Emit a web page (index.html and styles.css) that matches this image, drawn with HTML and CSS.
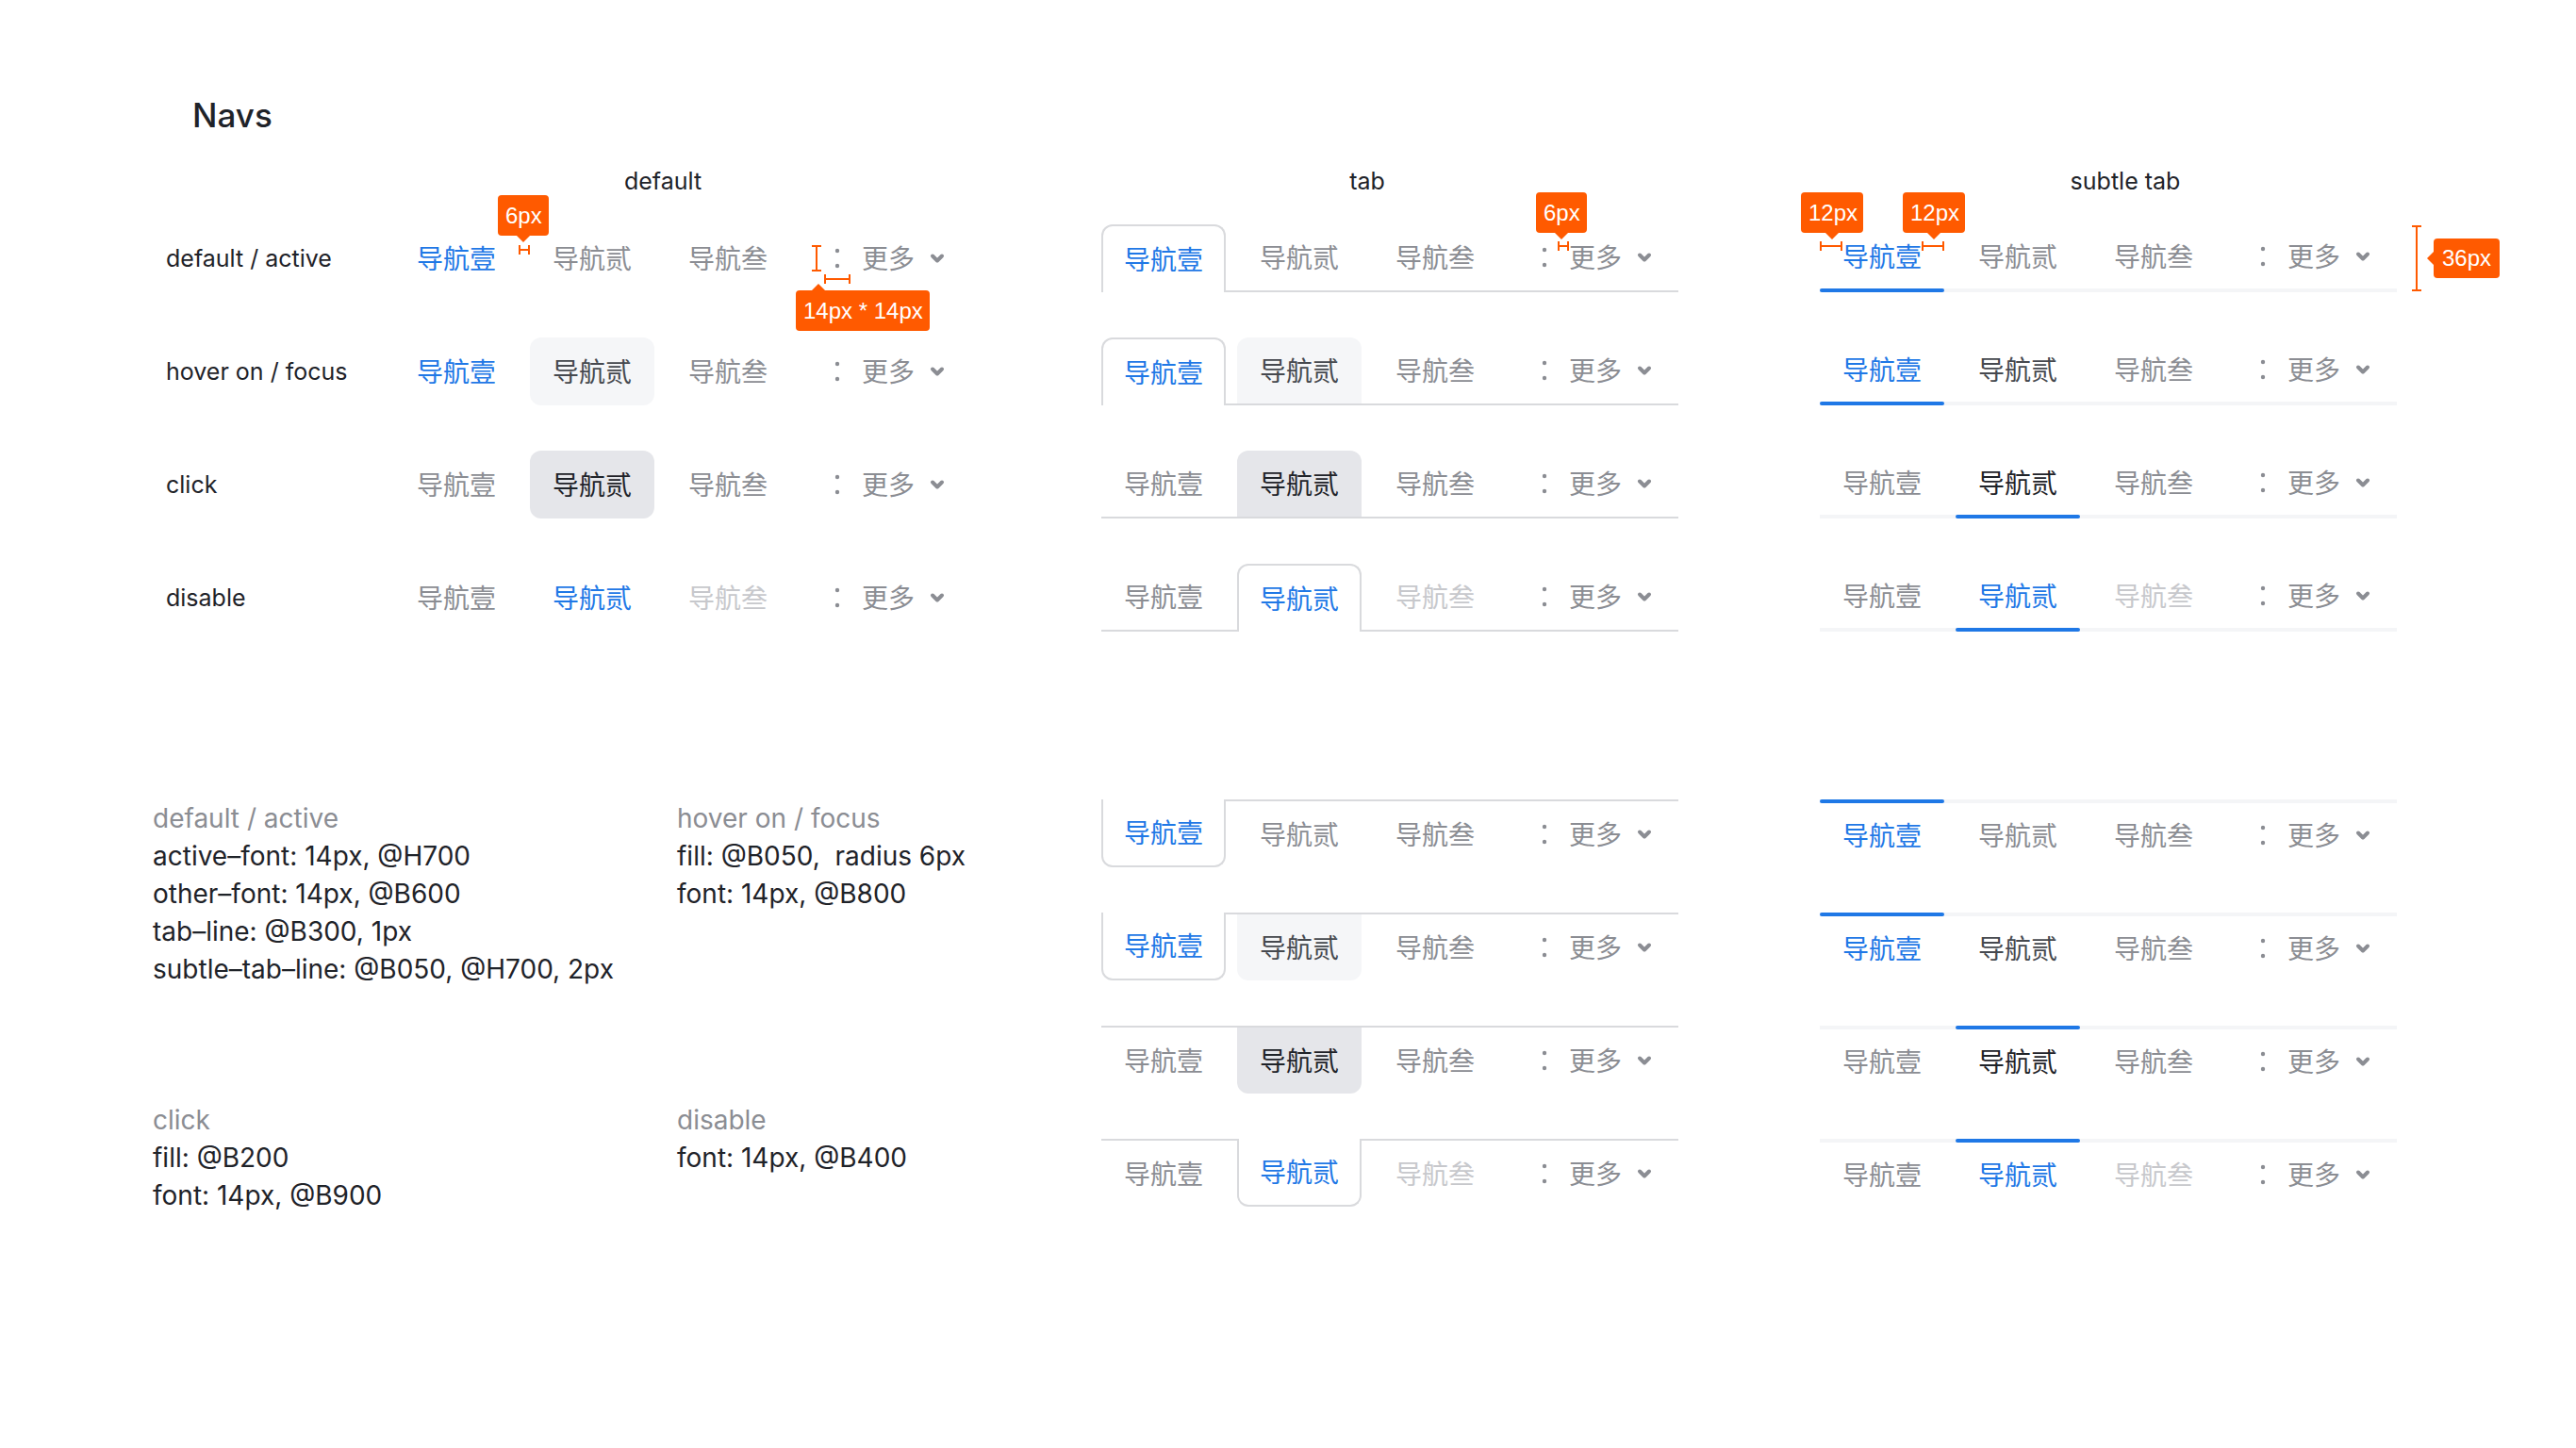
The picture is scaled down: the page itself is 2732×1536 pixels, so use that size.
FILE: index.html
```html
<!DOCTYPE html>
<html lang="zh-CN">
<head>
<meta charset="utf-8">
<title>Navs</title>
<link rel="stylesheet" href="styles.css">
</head>
<body>
<div class="page">
  <h1 class="title">Navs</h1>

  <div class="heads">
    <div></div>
    <div><div class="colhead h-default">default</div></div>
    <div><div class="colhead h-tab">tab</div></div>
    <div><div class="colhead h-subtle">subtle tab</div></div>
  </div>

  <section class="matrix">
    <!-- row 1 -->
    <div class="rlabel">default / active</div>
    <div class="cell">
      <nav class="nav plain">
        <span class="item active">导航壹</span>
        <span class="item">导航贰</span>
        <span class="item">导航叁</span>
        <span class="more"><svg class="dots" viewBox="0 0 28 28"><circle cx="14" cy="6" r="2.2"/><circle cx="14" cy="22" r="2.2"/></svg><span class="more-text">更多</span><svg class="chev" viewBox="0 0 24 24"><path d="M7 9.5 L12 14.5 L17 9.5"/></svg></span>
        <span class="badge b-def6">6px</span>
        <span class="hbracket hb-def6"></span>
        <span class="vbracket vb-icon"></span>
        <span class="hbracket hb-icon"></span>
        <span class="badge up b-icon">14px * 14px</span>
      </nav>
    </div>
    <div class="cell">
      <nav class="nav tabs">
        <span class="item active sel">导航壹</span>
        <span class="item">导航贰</span>
        <span class="item">导航叁</span>
        <span class="more"><svg class="dots" viewBox="0 0 28 28"><circle cx="14" cy="6" r="2.2"/><circle cx="14" cy="22" r="2.2"/></svg><span class="more-text">更多</span><svg class="chev" viewBox="0 0 24 24"><path d="M7 9.5 L12 14.5 L17 9.5"/></svg></span>
        <span class="badge b-tab6">6px</span>
        <span class="hbracket hb-tab6"></span>
      </nav>
    </div>
    <div class="cell">
      <nav class="nav subtle">
        <span class="item active ind">导航壹</span>
        <span class="item">导航贰</span>
        <span class="item">导航叁</span>
        <span class="more"><svg class="dots" viewBox="0 0 28 28"><circle cx="14" cy="6" r="2.2"/><circle cx="14" cy="22" r="2.2"/></svg><span class="more-text">更多</span><svg class="chev" viewBox="0 0 24 24"><path d="M7 9.5 L12 14.5 L17 9.5"/></svg></span>
        <span class="badge b-s12a">12px</span>
        <span class="badge b-s12b">12px</span>
        <span class="hbracket hb-s12a"></span>
        <span class="hbracket hb-s12b"></span>
        <span class="vbracket vb-36"></span>
        <span class="badge left b-36">36px</span>
      </nav>
    </div>

    <!-- row 2 -->
    <div class="rlabel">hover on / focus</div>
    <div class="cell">
      <nav class="nav plain">
        <span class="item active">导航壹</span>
        <span class="item hover">导航贰</span>
        <span class="item">导航叁</span>
        <span class="more"><svg class="dots" viewBox="0 0 28 28"><circle cx="14" cy="6" r="2.2"/><circle cx="14" cy="22" r="2.2"/></svg><span class="more-text">更多</span><svg class="chev" viewBox="0 0 24 24"><path d="M7 9.5 L12 14.5 L17 9.5"/></svg></span>
      </nav>
    </div>
    <div class="cell">
      <nav class="nav tabs">
        <span class="item active sel">导航壹</span>
        <span class="item hover">导航贰</span>
        <span class="item">导航叁</span>
        <span class="more"><svg class="dots" viewBox="0 0 28 28"><circle cx="14" cy="6" r="2.2"/><circle cx="14" cy="22" r="2.2"/></svg><span class="more-text">更多</span><svg class="chev" viewBox="0 0 24 24"><path d="M7 9.5 L12 14.5 L17 9.5"/></svg></span>
      </nav>
    </div>
    <div class="cell">
      <nav class="nav subtle">
        <span class="item active ind">导航壹</span>
        <span class="item hover">导航贰</span>
        <span class="item">导航叁</span>
        <span class="more"><svg class="dots" viewBox="0 0 28 28"><circle cx="14" cy="6" r="2.2"/><circle cx="14" cy="22" r="2.2"/></svg><span class="more-text">更多</span><svg class="chev" viewBox="0 0 24 24"><path d="M7 9.5 L12 14.5 L17 9.5"/></svg></span>
      </nav>
    </div>

    <!-- row 3 -->
    <div class="rlabel">click</div>
    <div class="cell">
      <nav class="nav plain">
        <span class="item">导航壹</span>
        <span class="item press">导航贰</span>
        <span class="item">导航叁</span>
        <span class="more"><svg class="dots" viewBox="0 0 28 28"><circle cx="14" cy="6" r="2.2"/><circle cx="14" cy="22" r="2.2"/></svg><span class="more-text">更多</span><svg class="chev" viewBox="0 0 24 24"><path d="M7 9.5 L12 14.5 L17 9.5"/></svg></span>
      </nav>
    </div>
    <div class="cell">
      <nav class="nav tabs">
        <span class="item">导航壹</span>
        <span class="item press">导航贰</span>
        <span class="item">导航叁</span>
        <span class="more"><svg class="dots" viewBox="0 0 28 28"><circle cx="14" cy="6" r="2.2"/><circle cx="14" cy="22" r="2.2"/></svg><span class="more-text">更多</span><svg class="chev" viewBox="0 0 24 24"><path d="M7 9.5 L12 14.5 L17 9.5"/></svg></span>
      </nav>
    </div>
    <div class="cell">
      <nav class="nav subtle">
        <span class="item">导航壹</span>
        <span class="item press ind">导航贰</span>
        <span class="item">导航叁</span>
        <span class="more"><svg class="dots" viewBox="0 0 28 28"><circle cx="14" cy="6" r="2.2"/><circle cx="14" cy="22" r="2.2"/></svg><span class="more-text">更多</span><svg class="chev" viewBox="0 0 24 24"><path d="M7 9.5 L12 14.5 L17 9.5"/></svg></span>
      </nav>
    </div>

    <!-- row 4 -->
    <div class="rlabel">disable</div>
    <div class="cell">
      <nav class="nav plain">
        <span class="item">导航壹</span>
        <span class="item active">导航贰</span>
        <span class="item disabled">导航叁</span>
        <span class="more"><svg class="dots" viewBox="0 0 28 28"><circle cx="14" cy="6" r="2.2"/><circle cx="14" cy="22" r="2.2"/></svg><span class="more-text">更多</span><svg class="chev" viewBox="0 0 24 24"><path d="M7 9.5 L12 14.5 L17 9.5"/></svg></span>
      </nav>
    </div>
    <div class="cell">
      <nav class="nav tabs">
        <span class="item">导航壹</span>
        <span class="item active sel">导航贰</span>
        <span class="item disabled">导航叁</span>
        <span class="more"><svg class="dots" viewBox="0 0 28 28"><circle cx="14" cy="6" r="2.2"/><circle cx="14" cy="22" r="2.2"/></svg><span class="more-text">更多</span><svg class="chev" viewBox="0 0 24 24"><path d="M7 9.5 L12 14.5 L17 9.5"/></svg></span>
      </nav>
    </div>
    <div class="cell">
      <nav class="nav subtle">
        <span class="item">导航壹</span>
        <span class="item active ind">导航贰</span>
        <span class="item disabled">导航叁</span>
        <span class="more"><svg class="dots" viewBox="0 0 28 28"><circle cx="14" cy="6" r="2.2"/><circle cx="14" cy="22" r="2.2"/></svg><span class="more-text">更多</span><svg class="chev" viewBox="0 0 24 24"><path d="M7 9.5 L12 14.5 L17 9.5"/></svg></span>
      </nav>
    </div>
  </section>

  <section class="lower">
    <div class="notes">
      <div class="note">
        <h3 class="note-head">default / active</h3>
        <p>active–font: 14px, @H700</p>
        <p>other–font: 14px, @B600</p>
        <p>tab–line: @B300, 1px</p>
        <p>subtle–tab–line: @B050, @H700, 2px</p>
      </div>
      <div class="note">
        <h3 class="note-head">hover on / focus</h3>
        <p>fill: @B050,&nbsp; radius 6px</p>
        <p>font: 14px, @B800</p>
      </div>
      <div class="note">
        <h3 class="note-head">click</h3>
        <p>fill: @B200</p>
        <p>font: 14px, @B900</p>
      </div>
      <div class="note">
        <h3 class="note-head">disable</h3>
        <p>font: 14px, @B400</p>
      </div>
    </div>

    <div class="stack">
      <nav class="nav tabs inv">
        <span class="item active sel">导航壹</span>
        <span class="item">导航贰</span>
        <span class="item">导航叁</span>
        <span class="more"><svg class="dots" viewBox="0 0 28 28"><circle cx="14" cy="6" r="2.2"/><circle cx="14" cy="22" r="2.2"/></svg><span class="more-text">更多</span><svg class="chev" viewBox="0 0 24 24"><path d="M7 9.5 L12 14.5 L17 9.5"/></svg></span>
      </nav>
      <nav class="nav tabs inv">
        <span class="item active sel">导航壹</span>
        <span class="item hover">导航贰</span>
        <span class="item">导航叁</span>
        <span class="more"><svg class="dots" viewBox="0 0 28 28"><circle cx="14" cy="6" r="2.2"/><circle cx="14" cy="22" r="2.2"/></svg><span class="more-text">更多</span><svg class="chev" viewBox="0 0 24 24"><path d="M7 9.5 L12 14.5 L17 9.5"/></svg></span>
      </nav>
      <nav class="nav tabs inv">
        <span class="item">导航壹</span>
        <span class="item press">导航贰</span>
        <span class="item">导航叁</span>
        <span class="more"><svg class="dots" viewBox="0 0 28 28"><circle cx="14" cy="6" r="2.2"/><circle cx="14" cy="22" r="2.2"/></svg><span class="more-text">更多</span><svg class="chev" viewBox="0 0 24 24"><path d="M7 9.5 L12 14.5 L17 9.5"/></svg></span>
      </nav>
      <nav class="nav tabs inv">
        <span class="item">导航壹</span>
        <span class="item active sel">导航贰</span>
        <span class="item disabled">导航叁</span>
        <span class="more"><svg class="dots" viewBox="0 0 28 28"><circle cx="14" cy="6" r="2.2"/><circle cx="14" cy="22" r="2.2"/></svg><span class="more-text">更多</span><svg class="chev" viewBox="0 0 24 24"><path d="M7 9.5 L12 14.5 L17 9.5"/></svg></span>
      </nav>
    </div>

    <div class="stack">
      <nav class="nav subtle inv">
        <span class="item active ind">导航壹</span>
        <span class="item">导航贰</span>
        <span class="item">导航叁</span>
        <span class="more"><svg class="dots" viewBox="0 0 28 28"><circle cx="14" cy="6" r="2.2"/><circle cx="14" cy="22" r="2.2"/></svg><span class="more-text">更多</span><svg class="chev" viewBox="0 0 24 24"><path d="M7 9.5 L12 14.5 L17 9.5"/></svg></span>
      </nav>
      <nav class="nav subtle inv">
        <span class="item active ind">导航壹</span>
        <span class="item hover">导航贰</span>
        <span class="item">导航叁</span>
        <span class="more"><svg class="dots" viewBox="0 0 28 28"><circle cx="14" cy="6" r="2.2"/><circle cx="14" cy="22" r="2.2"/></svg><span class="more-text">更多</span><svg class="chev" viewBox="0 0 24 24"><path d="M7 9.5 L12 14.5 L17 9.5"/></svg></span>
      </nav>
      <nav class="nav subtle inv">
        <span class="item">导航壹</span>
        <span class="item press ind">导航贰</span>
        <span class="item">导航叁</span>
        <span class="more"><svg class="dots" viewBox="0 0 28 28"><circle cx="14" cy="6" r="2.2"/><circle cx="14" cy="22" r="2.2"/></svg><span class="more-text">更多</span><svg class="chev" viewBox="0 0 24 24"><path d="M7 9.5 L12 14.5 L17 9.5"/></svg></span>
      </nav>
      <nav class="nav subtle inv">
        <span class="item">导航壹</span>
        <span class="item active ind">导航贰</span>
        <span class="item disabled">导航叁</span>
        <span class="more"><svg class="dots" viewBox="0 0 28 28"><circle cx="14" cy="6" r="2.2"/><circle cx="14" cy="22" r="2.2"/></svg><span class="more-text">更多</span><svg class="chev" viewBox="0 0 24 24"><path d="M7 9.5 L12 14.5 L17 9.5"/></svg></span>
      </nav>
    </div>
  </section>
</div>
</body>
</html>
```

FILE: styles.css
```css
* {
  box-sizing: border-box;
  margin: 0;
  padding: 0;
}

html, body {
  background: #ffffff;
}

body {
  width: 2732px;
  height: 1536px;
  overflow: hidden;
  font-family: "Inter", "Noto Sans CJK SC", sans-serif;
  color: #1f2329;
}

.page {
  padding-top: 100px;
}

.title {
  padding-left: 204px;
  font-size: 35px;
  line-height: 44px;
  font-weight: 500;
  color: #1f2329;
}

/* ---------- column heads ---------- */
.heads {
  display: grid;
  grid-template-columns: 242px 750px 762px 612px;
  margin-left: 176px;
  margin-top: 32px;
  height: 32px;
}

.colhead {
  font-size: 25px;
  line-height: 32px;
  text-align: center;
  color: #1f2329;
}

.h-default { width: 570px; }
.h-tab { width: 564px; }
.h-subtle { width: 648px; }

/* ---------- state matrix ---------- */
.matrix {
  display: grid;
  grid-template-columns: 242px 750px 762px 612px;
  grid-auto-rows: 72px;
  row-gap: 48px;
  margin-left: 176px;
  margin-top: 30px;
}

.rlabel {
  font-size: 25px;
  line-height: 72px;
  color: #1f2329;
}

/* ---------- nav base ---------- */
.nav {
  position: relative;
  display: flex;
  align-items: flex-end;
  gap: 12px;
  width: 612px;
  height: 72px;
  font-family: "Noto Sans CJK SC", "Inter", sans-serif;
  font-size: 28px;
}

.item {
  position: relative;
  display: flex;
  align-items: center;
  height: 72px;
  padding: 0 24px 3px;
  border-radius: 12px;
  color: #8b8d93;
  white-space: nowrap;
}

.item.active { color: #1f78e6; }
.item.hover { background: #f5f6f8; color: #46494f; }
.item.press { background: #e5e6ea; color: #1f2329; }
.item.disabled { color: #c7c8cc; }

.more {
  display: flex;
  align-items: center;
  gap: 12px;
  height: 72px;
  padding: 0 24px;
  color: #8b8d93;
  white-space: nowrap;
}

.more-text {
  padding-bottom: 3px;
}

.dots {
  width: 28px;
  height: 28px;
  fill: #8b8d93;
  flex: none;
}

.chev {
  width: 24px;
  height: 24px;
  flex: none;
  fill: none;
  stroke: #8b8d93;
  stroke-width: 4;
  stroke-linecap: round;
  stroke-linejoin: round;
}

/* ---------- tab ---------- */
.tabs {
  border-bottom: 2px solid #d9dadd;
}

.tabs .item,
.tabs .more {
  height: 70px;
}

.tabs .item {
  border-radius: 12px 12px 0 0;
}

.tabs .item.sel {
  height: 72px;
  margin-bottom: -2px;
  padding: 0 22px 3px;
  border: 2px solid #d9dadd;
  border-bottom: 0;
  background: #ffffff;
}

.tabs.inv {
  border-bottom: 0;
  border-top: 2px solid #d9dadd;
  align-items: flex-start;
}

.tabs.inv .item {
  border-radius: 0 0 12px 12px;
}

.tabs.inv .item.sel {
  margin-bottom: 0;
  margin-top: -2px;
  border: 2px solid #d9dadd;
  border-top: 0;
}

/* ---------- subtle tab ---------- */
.subtle {
  border-bottom: 4px solid #f4f5f7;
}

.subtle .item,
.subtle .more {
  height: 68px;
}

.subtle .item {
  border-radius: 0;
}

.subtle .item.hover,
.subtle .item.press {
  background: none;
}

.subtle .item.ind::after {
  content: "";
  position: absolute;
  left: 0;
  right: 0;
  bottom: -4px;
  height: 4px;
  border-radius: 2px;
  background: #1f78e6;
}

.subtle.inv {
  border-bottom: 0;
  border-top: 4px solid #f4f5f7;
  align-items: flex-start;
}

.subtle.inv .item.ind::after {
  bottom: auto;
  top: -4px;
}

/* ---------- annotations ---------- */
.badge {
  position: absolute;
  height: 43px;
  padding: 0 8px;
  border-radius: 4px;
  background: #ff5a00;
  color: #ffffff;
  font-family: "Liberation Sans", "Inter", sans-serif;
  font-size: 24px;
  line-height: 43px;
  text-align: center;
  white-space: nowrap;
}

.badge::after {
  content: "";
  position: absolute;
  left: 50%;
  top: 100%;
  margin-left: -7px;
  border-left: 7px solid transparent;
  border-right: 7px solid transparent;
  border-top: 7px solid #ff5a00;
}

.badge.up::after {
  top: auto;
  bottom: 100%;
  left: 24px;
  border-top: 0;
  border-bottom: 7px solid #ff5a00;
}

.badge.left::after {
  top: 50%;
  left: auto;
  right: 100%;
  margin-left: 0;
  margin-top: -7px;
  border-top: 7px solid transparent;
  border-bottom: 7px solid transparent;
  border-left: 0;
  border-right: 7px solid #ff5a00;
}

.hbracket {
  position: absolute;
  height: 10px;
  border-left: 2px solid #ff5a00;
  border-right: 2px solid #ff5a00;
}

.hbracket::after {
  content: "";
  position: absolute;
  left: 0;
  right: 0;
  top: 4px;
  height: 2px;
  background: #ff5a00;
}

.vbracket {
  position: absolute;
  width: 10px;
  border-top: 2px solid #ff5a00;
  border-bottom: 2px solid #ff5a00;
}

.vbracket::after {
  content: "";
  position: absolute;
  top: 0;
  bottom: 0;
  left: 4px;
  width: 2px;
  background: #ff5a00;
}

.b-def6 { left: 110px; top: -31px; width: 54px; }
.hb-def6 { left: 132px; top: 22px; width: 12px; }
.vb-icon { left: 443px; top: 22px; height: 28px; }
.hb-icon { left: 456px; top: 53px; width: 28px; }
.b-icon { left: 426px; top: 70px; width: 142px; }

.b-tab6 { left: 461px; top: -34px; width: 54px; }
.hb-tab6 { left: 484px; top: 18px; width: 12px; }

.b-s12a { left: -20px; top: -34px; width: 66px; }
.b-s12b { left: 88px; top: -34px; width: 66px; }
.hb-s12a { left: 0; top: 18px; width: 24px; }
.hb-s12b { left: 108px; top: 18px; width: 24px; }
.vb-36 { left: 628px; top: 1px; height: 70px; }
.b-36 { left: 651px; top: 15px; width: 70px; height: 42px; line-height: 42px; }

/* ---------- lower section ---------- */
.lower {
  display: grid;
  grid-template-columns: 1006px 762px 612px;
  margin-left: 162px;
  margin-top: 178px;
}

.notes {
  display: grid;
  grid-template-columns: 556px 450px;
  grid-template-rows: 320px auto;
  font-size: 28px;
  line-height: 40px;
}

.note-head {
  font-size: 28px;
  line-height: 40px;
  font-weight: 400;
  color: #8b8d93;
}

.note p {
  color: #1f2329;
}

.stack {
  display: flex;
  flex-direction: column;
  gap: 48px;
}
```
